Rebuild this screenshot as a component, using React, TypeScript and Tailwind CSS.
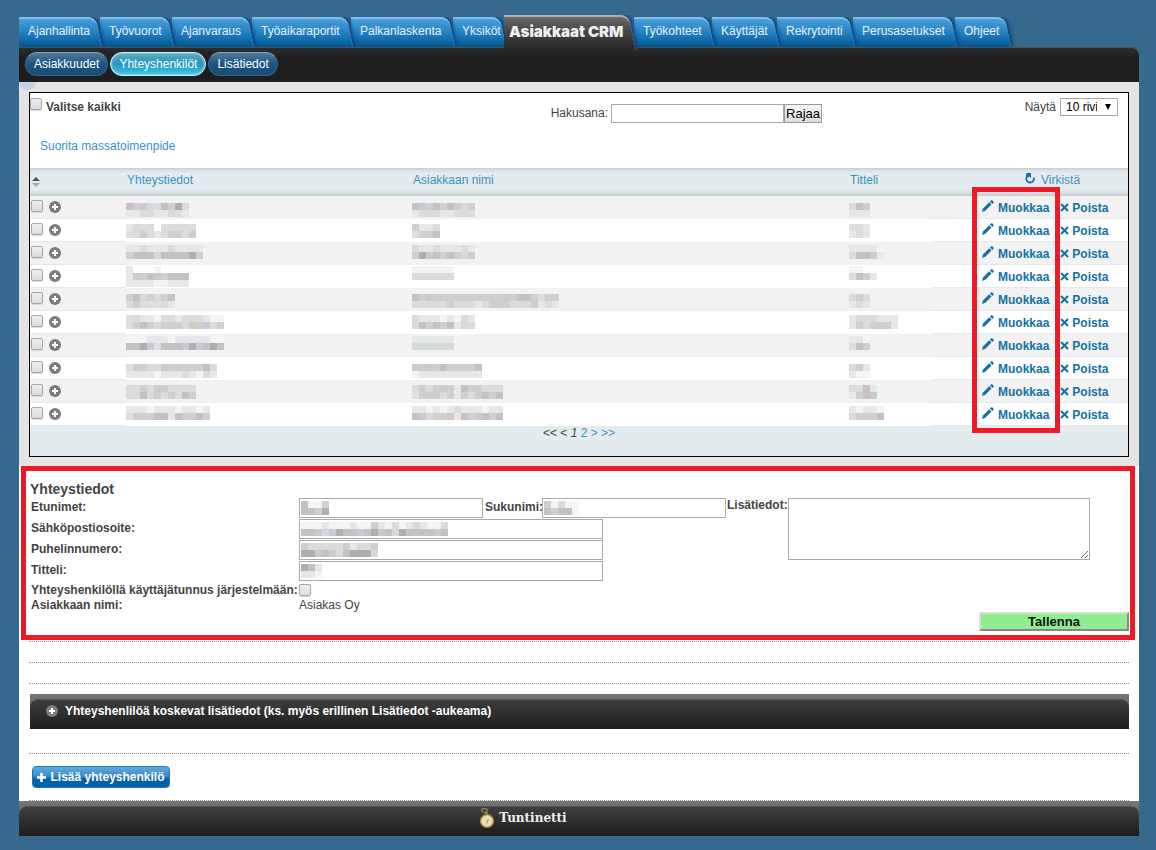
import { useState } from 'react';
import clsx from 'clsx';

const TABS = [
  { label: 'Ajanhallinta', width: 'w-[81px]' },
  { label: 'Työvuorot', width: 'w-[72px]' },
  { label: 'Ajanvaraus', width: 'w-[80px]' },
  { label: 'Työaikaraportit', width: 'w-[99px]' },
  { label: 'Palkanlaskenta', width: 'w-[102px]' },
  { label: 'Yksiköt', width: 'w-[51px]' },
  { label: 'Asiakkaat CRM', width: 'w-[130px]', active: true },
  { label: 'Työkohteet', width: 'w-[78px]' },
  { label: 'Käyttäjät', width: 'w-[65px]' },
  { label: 'Rekrytointi', width: 'w-[76px]' },
  { label: 'Perusasetukset', width: 'w-[102px]' },
  { label: 'Ohjeet', width: 'w-[54px]' },
];

const SUB_TABS = ['Asiakkuudet', 'Yhteyshenkilöt', 'Lisätiedot'];

// Shades of the censor blocks, one letter per block
const SHADES: Record<string, string> = {
  a: '#e8e7e8',
  b: '#dcdbdc',
  c: '#cfcfd0',
  d: '#c2c2c4',
  e: '#aeaeb1',
  p: '#c9bfc3',
  r: '#e4dbde',
  u: '#c6cad3',
  g: '#d4dad9',
  y: '#cfccc4',
  w: '#f3f4f6',
};

// top = where the blocks start inside the 23px row
const CONTACTS = [
  { top: 7, name: ['pcugbdceb', 'aabbaabra'], company: ['ducdcdcgc', 'abbbaabbb'], title: ['bdc', 'aaa'] },
  { top: 5, name: ['abbb.rbbbb', 'rbcbabccbc'], company: ['caab', 'rccd'], title: ['rba', 'aba'] },
  { top: 3, name: ['aabaaabaaaa', 'cdddgddddec'], company: ['baabaaaba', 'ceudcdcgc'], title: ['aaaaw', 'bddya'] },
  { top: 1, name: ['a...w....', 'aycpucddd', 'aaaawwaaa'], company: ['wwwwww', 'bbbbbb'], title: ['ww', 'rdca'] },
  { top: 6, name: ['cpgcbcd', 'bcbrrba'], company: ['pcuccccccccccucpdcbcc', 'bbbbbcbbbabcccbbbcaba'], title: ['bcb', 'aba'] },
  { top: 4, name: ['rbaawrbabbbaww', 'rcdcgcccbycubc'], company: ['baaawawba', 'bdcdcdagb'], title: ['abbbaaa', 'acbccca'] },
  { top: 2, name: ['wwwaaawaaaaaww', 'pdeurdddueuded'], company: ['aaaaaa', 'gggggg'], title: ['aaw', 'rdc'] },
  { top: 7, name: ['rccbbucycccdb', 'aaaawaaabawba'], company: ['yyucdccccd', 'waaaaaaaaa'], title: ['bca', 'aww'] },
  { top: 5, name: ['bbcbycbbbb', 'bbdbcbcbdc'], company: ['bcbcycapccbbb', 'rcccbcacbcdcd'], title: ['bbpa', 'acpu'] },
  { top: 3, name: ['aaawaaawaawa', 'rcccddadccdc'], company: ['aawawaraaawaa', 'pugccyapcudcd'], title: ['awaaw', 'bcccd'] },
];

function Blocks({ rows, top = 0, height = 23, className }: { rows: string[]; top?: number; height?: number; className?: string }) {
  return (
    <svg
      width={Math.max(...rows.map((row) => row.length)) * 7}
      height={height}
      shapeRendering="crispEdges"
      aria-hidden="true"
      className={clsx('block', className)}
    >
      {rows.map((row, y) =>
        row.split('').map((shade, x) =>
          SHADES[shade] ? (
            <rect key={`${x}-${y}`} x={x * 7} y={top + y * 7} width="7" height="7" fill={SHADES[shade]} />
          ) : null
        )
      )}
    </svg>
  );
}

function PlusCircle() {
  return (
    <svg width="12" height="12" viewBox="0 0 12 12" className="block shrink-0" aria-hidden="true">
      <circle cx="6" cy="6" r="6" fill="#7b7d7f" />
      <path d="M6 3v6M3 6h6" stroke="#fff" strokeWidth="2" />
    </svg>
  );
}

function Pencil() {
  return (
    <svg width="12" height="12" viewBox="0 0 12 12" className="block mb-[3px]" aria-hidden="true">
      <path d="M0 12l1-3.500 6.200-6.200 2.300 2.300-6.200 6.200z" fill="#1272a3" />
      <path d="M8 1.500l1-1c.5-.5 1-.5 1.500 0l.9.900c.5.500.5 1 0 1.500l-1 1z" fill="#1272a3" />
    </svg>
  );
}

function Cross() {
  return (
    <svg width="9" height="9" viewBox="0 0 9 9" className="block" aria-hidden="true">
      <path d="M1 1l7 7M8 1L1 8" stroke="#1272a3" strokeWidth="2" />
    </svg>
  );
}

function Refresh() {
  return (
    <svg width="10" height="11" viewBox="0 0 10 11" className="block mb-[3px]" aria-hidden="true">
      <path d="M8.700 4.500A3.800 3.800 0 1 1 1.500 4.500" fill="none" stroke="#1272a3" strokeWidth="1.800" />
      <path d="M1.500 0h4.500v5L4.500 3.500 1.800 5.200 0.800 4z" fill="#1272a3" />
    </svg>
  );
}

function StopWatch() {
  return (
    <svg width="16" height="21" viewBox="0 0 16 21" className="block" aria-hidden="true">
      <ellipse cx="5.500" cy="2.500" rx="3" ry="1.800" fill="none" stroke="#8d8064" strokeWidth="1.200" />
      <path d="M7 4l1 3" stroke="#a8956a" strokeWidth="2" />
      <circle cx="8" cy="13" r="7.200" fill="#9c8145" />
      <circle cx="8" cy="13" r="5.800" fill="#e6dfb4" />
      <path d="M8 13l2-1.500M8 13v2.500" stroke="#8f8862" strokeWidth="1" />
    </svg>
  );
}

const checkboxClass =
  'block appearance-none shrink-0 w-3 h-3 rounded-[2px] border border-[#a6a6a6] bg-linear-to-b from-[#efefef] to-[#dcdcdc] shadow-[0_1px_1px_#d8d8d8] checked:bg-none checked:bg-[#1272a3]';
const inputClass = 'block h-5 border border-[#a9a9a9] bg-white px-1 text-[12px] outline-none';

function Tab({ label, width, active, index }: { label: string; width: string; active?: boolean; index: number }) {
  return (
    <li className={clsx('relative h-[30px]', width)} style={{ zIndex: active ? 40 : TABS.length - index }}>
      <span
        className={clsx(
          'absolute left-0 -right-3 overflow-hidden pr-2.5',
          active ? '-top-0.5 -bottom-1' : 'top-0 bottom-0'
        )}
      >
        <span
          className={clsx(
            'block h-full -ml-3 origin-bottom skew-x-[12deg] rounded-tr-lg',
            active
              ? 'bg-linear-to-b from-[#6e6e6e] via-[#424242] to-[#252525] shadow-[inset_0_2px_1px_#b4b4b4,2px_0_4px_#0a3d86]'
              : 'bg-linear-to-b from-[#4ba3de] via-[#2583c3] to-[#005694] shadow-[inset_0_2px_1px_#86bde6,2px_0_4px_#06397f]'
          )}
        />
      </span>
      <a
        href="#"
        className={clsx(
          'relative block whitespace-nowrap',
          active
            ? "pl-[5px] text-[15px] leading-[30px] font-black text-[#eeeeee] font-['Inter',sans-serif]"
            : 'pl-[9px] text-[12px] leading-[28px] text-[#e8f1f8]'
        )}
      >
        {label}
      </a>
    </li>
  );
}

function DarkBar({ children }: { children: React.ReactNode }) {
  return (
    <div className="h-[35px] pt-[5px] bg-linear-to-b from-[#777777] to-[#484848]">
      <div className="h-full rounded-t-lg border-t border-[#555555] bg-linear-to-b from-[#3f3f3f] to-[#1d1d1d]">
        {children}
      </div>
    </div>
  );
}

function ContactTable() {
  return (
    <div className="relative">
      <table className="w-full table-fixed border-separate border-spacing-0">
        <colgroup>
          <col className="w-[96px]" />
          <col className="w-[286px]" />
          <col />
          <col className="w-[83px]" />
          <col className="w-[196px]" />
        </colgroup>
        <thead>
          <tr className="h-7 text-left text-[#3d91c2] bg-[linear-gradient(#c3cdd0,#d6dfe2_2px,#e4ebee_5px,#e4ebee_22px,#d6dfe2_25px,#c0cacd)]">
            <th className="p-0">
              <button type="button" aria-label="Järjestä" className="block ml-[2px]">
                <svg width="8" height="10" viewBox="0 0 8 10" className="block">
                  <path d="M0 4l4-4 4 4z" fill="#555544" />
                  <path d="M0 6l4 4 4-4z" fill="#aaaaaa" />
                </svg>
              </button>
            </th>
            <th className="p-0 pl-px pb-1 font-normal"><a href="#">Yhteystiedot</a></th>
            <th className="p-0 pl-px pb-1 font-normal"><a href="#">Asiakkaan nimi</a></th>
            <th className="p-0 pl-px pb-1 font-normal"><a href="#">Titteli</a></th>
            <th className="p-0 pb-1 pl-[93px] font-normal">
              <a href="#" className="flex items-center gap-1.5">
                <Refresh />
                Virkistä
              </a>
            </th>
          </tr>
        </thead>
        <tbody>
          {CONTACTS.map((contact, i) => (
            <tr key={i} className="h-[23px] odd:bg-[#f2f2f2] even:bg-white">
              <td className="p-0 border-b border-[#e2eaee]">
                <div className="flex items-center gap-1.5 pl-px pb-px">
                  <input type="checkbox" aria-label={`Valitse rivi ${i + 1}`} className={clsx(checkboxClass, 'mb-0.5')} />
                  <button type="button" aria-label="Näytä tiedot"><PlusCircle /></button>
                </div>
              </td>
              <td className="p-0"><Blocks rows={contact.name} top={contact.top} /></td>
              <td className="p-0"><Blocks rows={contact.company} top={contact.top} /></td>
              <td className="p-0"><Blocks rows={contact.title} top={contact.top} /></td>
              <td className="p-0 pt-px pl-[50px] border-b border-[#e2eaee] font-bold text-[#1272a3]">
                <div className="flex items-center gap-[11px]">
                  <a href="#" className="flex items-center gap-1"><Pencil />Muokkaa</a>
                  <a href="#" className="flex items-center gap-[3px]"><Cross />Poista</a>
                </div>
              </td>
            </tr>
          ))}
        </tbody>
      </table>
      <div className="absolute top-[19px] -bottom-[7px] right-[68px] w-[88px] border-5 border-[#ed1c24] pointer-events-none" />
    </div>
  );
}

function ContactForm() {
  return (
    <form
      className="ml-[2px] mr-1 border-5 border-[#ed1c24] bg-white pl-[5px] pr-px pt-[9px] pb-1"
      onSubmit={(e) => e.preventDefault()}
    >
      <h2 className="text-[14px] leading-[18px] font-bold -ml-px">Yhteystiedot</h2>
      <div className="flex font-bold">
        <div className="w-[695px] shrink-0">
          <div className="flex h-[21px]">
            <label htmlFor="etunimet" className="w-[268px]">Etunimet:</label>
            <div className="relative">
              <input id="etunimet" className={clsx(inputClass, 'w-[184px]')} />
              <Blocks rows={['dwwc', 'pdce']} height={14} className="absolute left-[2px] top-[3px]" />
            </div>
            <label htmlFor="sukunimi" className="w-[59px] pl-[2px]">Sukunimi:</label>
            <div className="relative">
              <input id="sukunimi" className={clsx(inputClass, 'w-[184px]')} />
              <Blocks rows={['cwbww', 'dcpdw']} height={14} className="absolute left-[2px] top-[3px]" />
            </div>
          </div>
          <div className="flex h-[21px]">
            <label htmlFor="email" className="w-[268px]">Sähköpostiosoite:</label>
            <div className="relative">
              <input id="email" type="email" className={clsx(inputClass, 'w-[304px]')} />
              <Blocks
                rows={['wwwawwwawwcawbwabawwb', 'pdugueddudeupgeddddyd']}
                height={14}
                className="absolute left-[2px] top-[3px]"
              />
            </div>
          </div>
          <div className="flex h-[21px]">
            <label htmlFor="puhelin" className="w-[268px]">Puhelinnumero:</label>
            <div className="relative">
              <input id="puhelin" type="tel" className={clsx(inputClass, 'w-[304px]')} />
              <Blocks rows={['cbbbbbcabbc', 'eeupcbdeeeg']} height={14} className="absolute left-[2px] top-[3px]" />
            </div>
          </div>
          <div className="flex h-[21px]">
            <label htmlFor="titteli" className="w-[268px]">Titteli:</label>
            <div className="relative">
              <input id="titteli" className={clsx(inputClass, 'w-[304px]')} />
              <Blocks rows={['epa', 'aaw']} height={14} className="absolute left-[2px] top-[3px]" />
            </div>
          </div>
          <div className="flex h-[15px] items-center">
            <label htmlFor="tunnus" className="w-[268px] whitespace-nowrap">
              Yhteyshenkilöllä käyttäjätunnus järjestelmään:
            </label>
            <input id="tunnus" type="checkbox" className={checkboxClass} />
          </div>
          <div className="flex h-[15px] items-center">
            <span className="w-[268px]">Asiakkaan nimi:</span>
            <span className="font-normal">Asiakas Oy</span>
          </div>
        </div>
        <label htmlFor="lisatiedot" className="w-[62px] pl-px shrink-0 leading-[14px]">Lisätiedot:</label>
        <textarea id="lisatiedot" className="block w-[302px] h-[62px] border border-[#a9a9a9] bg-white outline-none" />
      </div>
      <div className="flex justify-end">
        <button
          type="submit"
          className="w-[150px] h-[19px] border-2 border-t-[#dddddd] border-l-[#dddddd] border-r-[#888888] border-b-[#888888] bg-[#90ee90] text-[13px] leading-[14px] font-bold text-[#111111]"
        >
          Tallenna
        </button>
      </div>
    </form>
  );
}

export default function App() {
  const [subTab, setSubTab] = useState('Yhteyshenkilöt');

  return (
    <div className="min-h-screen bg-[#37698c] pl-[19px] pr-[17px] pt-[17px] pb-3.5 text-[12px] leading-[18px] text-[#444444] font-['Liberation_Sans',Arial,sans-serif]">
      <nav>
        <ul className="flex">
          {TABS.map((tab, i) => (
            <Tab key={tab.label} index={i} {...tab} />
          ))}
        </ul>
      </nav>

      <div className="flex gap-0.5 h-[35px] pl-1.5 pt-1 rounded-tr-lg border-t border-[#505050] bg-linear-to-b from-[#2c2c2c] to-[#1e1e1e] to-30%">
        {SUB_TABS.map((label) => (
          <button
            key={label}
            type="button"
            onClick={() => setSubTab(label)}
            className={clsx(
              'h-6 px-2 rounded-full border text-white leading-[22px]',
              label === subTab
                ? 'border-[#d5f1f8] bg-linear-to-b from-[#5aa7c2] via-[#2596bd] to-[#3fc6e6] shadow-[inset_0_0_3px_#b8ecf8]'
                : 'border-[#3c6688] border-t-[#88a4b8] bg-linear-to-b from-[#4d7b9c] via-[#1d5580] to-[#134d78]'
            )}
          >
            {label}
          </button>
        ))}
      </div>

      <main className="bg-white">
        <div className="relative bg-[#e4e4e4] px-2.5 pt-2.5 pb-[9px]">
          <span className="absolute left-0 top-0 w-[17px] h-2 rounded-b-full bg-[#c6d2e4]" />
          <div className="relative border border-black bg-white">
            <div className="flex h-[75px]">
              <div className="flex-1">
                <label className="flex gap-1 pt-[5px] font-bold">
                  <input type="checkbox" className={checkboxClass} />
                  Valitse kaikki
                </label>
                <a href="#" className="inline-block ml-2.5 mt-[21px] text-[#3d91c2]">Suorita massatoimenpide</a>
              </div>
              <form className="flex h-[19px] mt-[11px]" onSubmit={(e) => e.preventDefault()}>
                <label htmlFor="hakusana" className="pr-[3px]">Hakusana:</label>
                <input id="hakusana" className="w-[173px] border border-[#a9a9a9] px-1 outline-none" />
                <button
                  type="submit"
                  className="w-[38px] border border-[#9a9a9a] bg-linear-to-b from-[#f5f5f5] to-[#dddddd] text-[13px] leading-[17px] text-black"
                >
                  Rajaa
                </button>
              </form>
              <div className="flex w-[306px] justify-end gap-1 pt-[5px] pr-2.5">
                <label htmlFor="rivit">Näytä</label>
                <div className="relative h-[18px]">
                  <select
                    id="rivit"
                    className="block appearance-none w-[58px] h-[18px] border border-[#a9a9a9] bg-white pl-[5px] pr-5 leading-4 text-black overflow-hidden"
                  >
                    <option>10 riviä</option>
                    <option>25 riviä</option>
                    <option>50 riviä</option>
                  </select>
                  <svg width="6" height="6" viewBox="0 0 6 6" className="absolute right-[7px] top-1.5 pointer-events-none">
                    <path d="M0 0h6L3 6z" fill="#000" />
                  </svg>
                </div>
              </div>
            </div>

            <ContactTable />

            <div className="h-[30px] bg-[#e4ebee] text-center leading-[14px]">
              <span>&lt;&lt;</span> <span>&lt;</span> <i>1</i>{' '}
              <a href="#" className="text-[#3d91c2]">2</a>{' '}
              <a href="#" className="text-[#3d91c2]">&gt;</a>{' '}
              <a href="#" className="text-[#3d91c2]">&gt;&gt;</a>
            </div>
          </div>
        </div>

        <ContactForm />

        <div className="px-2.5">
          <div className="h-[22px] mt-px border-y border-dotted border-[#999999]" />
          <div className="h-[21px] border-b border-dotted border-[#999999]" />
          <div className="pl-px pt-2.5 pb-6 border-b border-dotted border-[#999999]">
            <DarkBar>
              <button type="button" className="flex items-center gap-[7px] pl-4 h-[22px] font-bold text-white">
                <PlusCircle />
                Yhteyshenlilöä koskevat lisätiedot (ks. myös erillinen Lisätiedot -aukeama)
              </button>
            </DarkBar>
          </div>
          <div className="pl-[3px] pt-3 pb-3 border-b border-dotted border-[#999999]">
            <button
              type="button"
              className="flex items-center justify-center gap-1 w-[138px] h-[22px] rounded border border-[#1f78b8] bg-linear-to-b from-[#62a8dc] via-[#3d8dcb] via-45% to-[#0062a8] to-60% font-bold text-white whitespace-nowrap"
            >
              <svg width="9" height="9" viewBox="0 0 9 9" aria-hidden="true">
                <path d="M4.500 0v9M0 4.500h9" stroke="#fff" strokeWidth="2.600" />
              </svg>
              Lisää yhteyshenkilö
            </button>
          </div>
        </div>
      </main>

      <footer>
        <DarkBar>
          <div className="flex items-center h-[22px] justify-center pr-28 gap-1">
            <StopWatch />
            <span className="text-[12px] font-bold text-[#eeeeee] font-['DejaVu_Serif',serif]">Tuntinetti</span>
          </div>
        </DarkBar>
      </footer>
    </div>
  );
}
